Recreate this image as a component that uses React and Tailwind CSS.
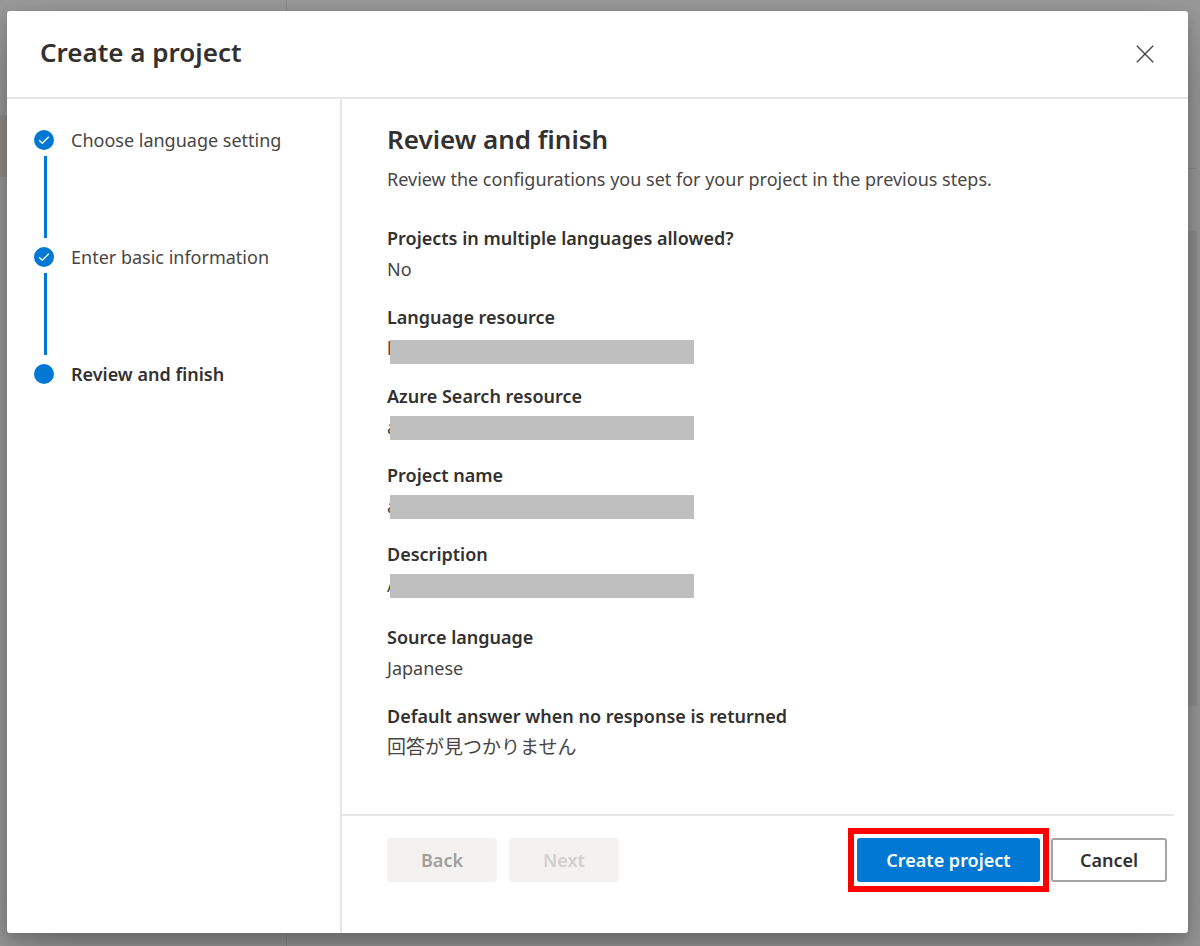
import { useState } from "react";
import clsx from "clsx";

const steps = [
    { label: "Choose language setting", done: true },
    { label: "Enter basic information", done: true },
    { label: "Review and finish", current: true },
];

const fields = [
    { label: "Projects in multiple languages allowed?", value: "No" },
    { label: "Language resource", value: "l", masked: true, maskAlign: "items-end" },
    { label: "Azure Search resource", value: "a", masked: true },
    { label: "Project name", value: "a", masked: true },
    { label: "Description", value: "A", masked: true, last: true },
    { label: "Source language", value: "Japanese" },
    { label: "Default answer when no response is returned", value: "回答が見つかりません", lang: "ja" },
];

// Dimmed page behind the dialog
const Backdrop = () => (
    <div aria-hidden="true" className="absolute inset-0 flex bg-[#999999]">
        <div className="w-[287px] border-r border-[#8a8a8a] pt-[115px]">
            <div className="h-[62px] bg-[#8f8d8b]" />
        </div>
        <div className="flex flex-1 flex-col pr-[3px] pt-[168px]">
            <div className="mb-[62px] h-px bg-[#8a8a8a]" />
            <div className="h-[475px] bg-[#8f8f8f]" />
        </div>
    </div>
);

const StepIcon = ({ done }) => (
    <svg viewBox="0 0 20 20" className="size-5" aria-hidden="true">
        <circle cx="10" cy="10" r="10" fill="#0078d4" />
        {done && <path d="M5.2 10.3 8.3 13.3 14.8 6.8" fill="none" stroke="#fff" strokeWidth="1.3" />}
    </svg>
);

const Step = ({ label, done, current }) => (
    <li className="flex gap-[17px]">
        <div className="flex w-5 flex-col items-start">
            <StepIcon done={done} />
            {done && <span className="mt-[6px] mb-[9px] ml-[10px] h-[82px] w-[3px] bg-[#0078d4]" />}
        </div>
        <span
            aria-current={current ? "step" : undefined}
            className={clsx("h-5 text-lg leading-5", current ? "font-semibold text-[#323130]" : "text-[#484644]")}
        >
            {label}
        </span>
    </li>
);

const Field = ({ label, value, lang, masked, maskAlign = "items-center", last }) => (
    <div className={last ? "mb-[21px]" : "mb-[17px]"}>
        <dt className="text-lg leading-[31px] font-semibold text-[#323130]">{label}</dt>
        <dd
            lang={lang}
            className={clsx("relative leading-[31px] text-[#484644]", lang === "ja" ? "text-[19px]" : "text-lg", masked && "h-[31px]")}
        >
            {value}
            {masked && (
                <span className={clsx("absolute inset-y-0 left-[3px] flex w-76", maskAlign)}>
                    <span className="h-6 w-full bg-[#bfbfbf]" />
                </span>
            )}
        </dd>
    </div>
);

export default function App() {
    const [open, setOpen] = useState(true);

    return (
        <div className="relative flex min-h-screen flex-col overflow-hidden pt-[11px] pr-3 pb-[13px] pl-[7px] font-['Noto_Sans','Noto_Sans_CJK_JP',sans-serif]">
            <Backdrop />
            {open && (
                <div
                    role="dialog"
                    aria-labelledby="dialog-title"
                    className="relative flex flex-1 flex-col rounded-[3px] bg-white shadow-[0_26px_58px_rgba(0,0,0,0.22),0_5px_14px_rgba(0,0,0,0.18)]"
                >
                    <header className="flex h-[88px] items-start justify-between border-b-2 border-[#e6e6e6] pt-[25px] pr-[34px] pl-[33px]">
                        <h1 id="dialog-title" className="text-[26px] leading-8 font-semibold text-[#323130]">Create a project</h1>
                        <button type="button" aria-label="Close" onClick={() => setOpen(false)} className="flex h-9 items-center">
                            <svg viewBox="0 0 18 18" className="size-[18px]" fill="none" stroke="#484644" strokeWidth="1.4">
                                <path d="M.8.8 17.2 17.2M17.2.8.8 17.2" />
                            </svg>
                        </button>
                    </header>

                    <div className="flex flex-1">
                        <nav aria-label="Steps" className="w-[335px] shrink-0 border-r-2 border-[#e6e6e6] pt-[31px] pl-[27px]">
                            <ol>
                                {steps.map((step) => (
                                    <Step key={step.label} {...step} />
                                ))}
                            </ol>
                        </nav>

                        <div className="mr-[14px] flex flex-1 flex-col">
                            <main className="flex-1 pt-[22px] pl-[45px]">
                                <h2 className="text-[26px] leading-9 font-semibold text-[#323130]">Review and finish</h2>
                                <p className="mt-[6px] mb-7 text-lg leading-8 text-[#484644]">
                                    Review the configurations you set for your project in the previous steps.
                                </p>
                                <dl>
                                    {fields.map((field) => (
                                        <Field key={field.label} {...field} />
                                    ))}
                                </dl>
                            </main>

                            <footer className="flex h-[119px] items-start justify-between border-t-2 border-[#e6e6e6] pt-[22px] pr-[7px] pl-[45px] text-lg font-semibold">
                                <div className="flex gap-3">
                                    <button type="button" disabled className="h-11 w-[110px] rounded-[3px] bg-[#f3f2f1] text-[#a19f9d]">Back</button>
                                    <button type="button" disabled className="h-11 w-[110px] rounded-[3px] bg-[#f3f2f1] text-[#d2d0ce]">Next</button>
                                </div>
                                <div className="flex gap-[11px]">
                                    <div className="relative">
                                        <button type="button" className="h-11 w-[183px] rounded-[3px] bg-[#0078d4] text-white">Create project</button>
                                        <span className="pointer-events-none absolute -inset-x-[9px] -inset-y-[10px] border-6 border-[#ff0000]" />
                                    </div>
                                    <button
                                        type="button"
                                        onClick={() => setOpen(false)}
                                        className="h-11 w-[116px] rounded-[3px] border-2 border-[#a6a4a2] text-[#323130]"
                                    >
                                        Cancel
                                    </button>
                                </div>
                            </footer>
                        </div>
                    </div>
                </div>
            )}
        </div>
    );
}
